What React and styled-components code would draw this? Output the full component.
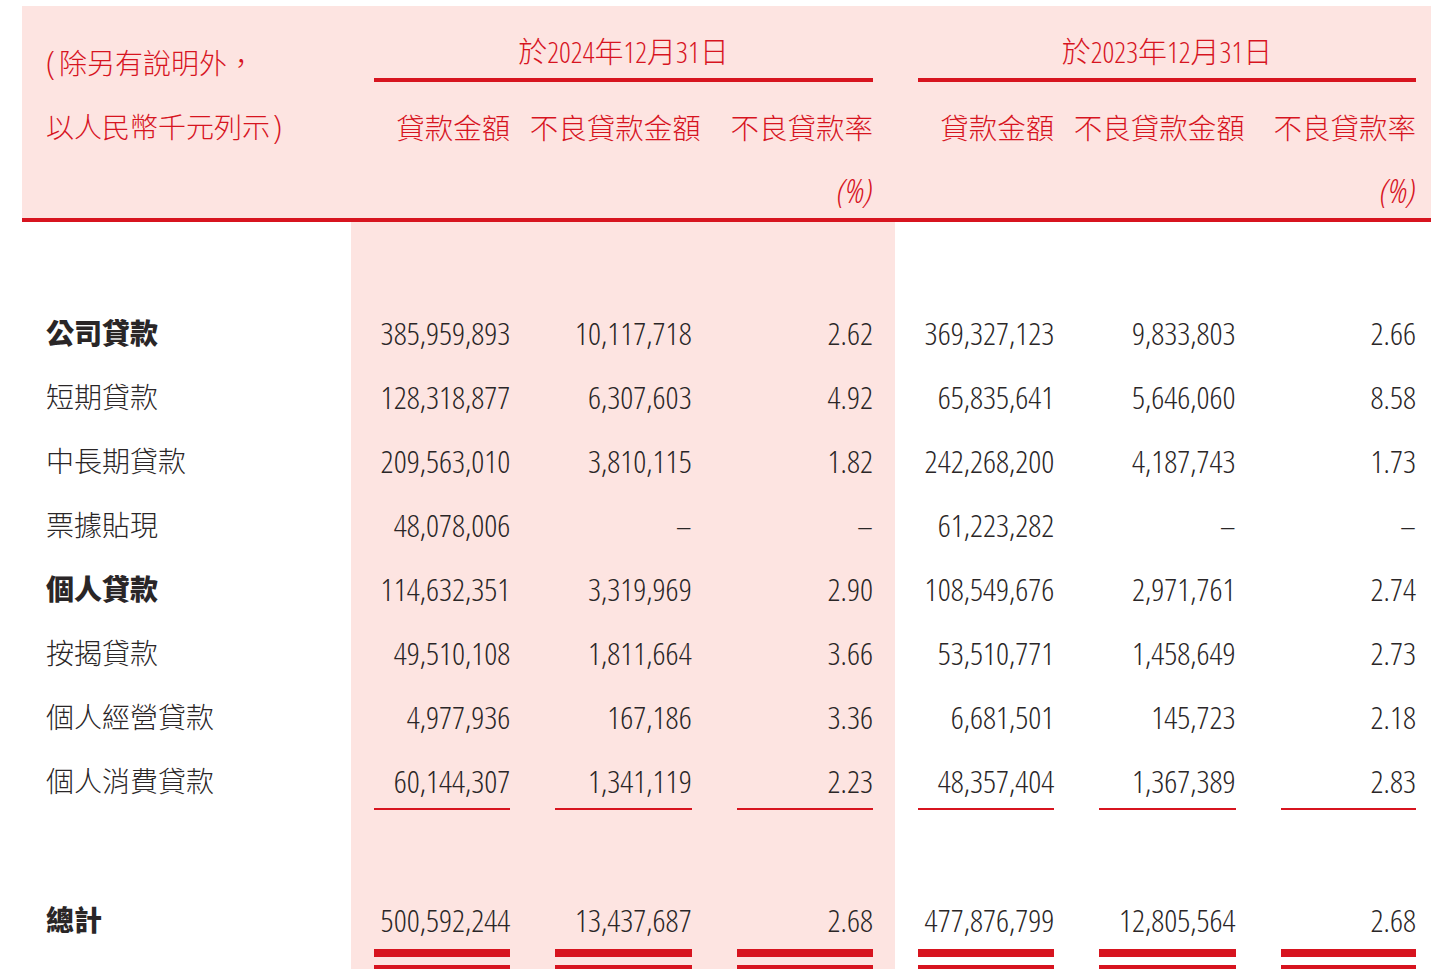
import React from "react";
import styled, { createGlobalStyle } from "styled-components";

const RED = "#d7141f";
const PINK = "#fde4e1";
const INK = "#2a2627";
const COLS = "329px repeat(5, 181.33px) 1fr";

const GlobalStyle = createGlobalStyle`
  html, body {
    margin: 0;
    padding: 0;
    background: #fff;
  }
  body {
    overflow: hidden;
  }
`;

const Page = styled.div`
  width: 1431px;
  height: 977px;
  box-sizing: border-box;
  padding: 6px 0 0 22px;
  background: #fff;
  font-family: "Open Sans", "Noto Sans CJK TC", sans-serif;
`;

const Sheet = styled.div`
  height: 963px;
  overflow: hidden;
`;

const Head = styled.header`
  display: grid;
  grid-template-columns: ${COLS};
  grid-template-rows: 76px 82px 54px;
  background: ${PINK};
  border-bottom: 4px solid ${RED};
  color: ${RED};
  font-weight: 300;
  font-stretch: 75%;
`;

const Caption = styled.div`
  grid-column: 1;
  grid-row: 1 / 4;
  padding: 25px 0 0 24px;
  font-size: 28px;
  line-height: 64px;
  white-space: nowrap;
`;

const Paren = styled.span`
  display: inline-block;
  font-size: 33px;
  font-weight: 300;
  margin: ${(p) => (p.$close ? "0 0 0 3px" : "0 4px 0 0")};
  vertical-align: top;
`;

const GroupCell = styled.div`
  grid-row: 1;
  grid-column: span 3;
  padding: 20px ${(p) => (p.$last ? 15 : 22)}px 0 23px;
`;

const GroupTitle = styled.div`
  height: 56px;
  box-sizing: border-box;
  border-bottom: 4px solid ${RED};
  text-align: center;
  font-size: 29px;
  line-height: 52px;
  white-space: nowrap;
`;

const ColHead = styled.div`
  grid-row: ${(p) => p.$row};
  display: flex;
  justify-content: flex-end;
  padding: ${(p) => (p.$row === 2 ? 28 : 8)}px ${(p) => (p.$last ? 15 : 22)}px 0 0;
  margin-right: ${(p) => (p.$shift ? -9 : 0)}px;
  font-size: ${(p) => (p.$row === 2 ? 28.5 : 34)}px;
  font-style: ${(p) => (p.$row === 3 ? "italic" : "normal")};
  line-height: 36px;
  white-space: nowrap;
`;

const Body = styled.section`
  height: 747px;
  box-sizing: border-box;
  padding-top: 79px;
  background: linear-gradient(
    to right,
    transparent 329px,
    ${PINK} 329px,
    ${PINK} 873px,
    transparent 873px
  );
`;

const Row = styled.div`
  display: grid;
  grid-template-columns: ${COLS};
  height: 64px;
`;

const Spacer = styled.div`
  height: 75px;
`;

const Label = styled.div`
  padding: 14px 0 0 24px;
  font-size: 28px;
  line-height: 36px;
  font-weight: ${(p) => (p.$bold ? 900 : 300)};
  color: ${INK};
  white-space: nowrap;
`;

const Cell = styled.div`
  padding: 14px ${(p) => (p.$last ? 15 : 22)}px 0 23px;
`;

const Value = styled.div`
  text-align: right;
  font-size: 32px;
  line-height: 36px;
  font-weight: 300;
  font-stretch: 75%;
  color: ${INK};
  white-space: nowrap;
  padding-bottom: ${(p) => (p.$rule === "double" ? 11 : p.$rule ? 9 : 0)}px;
  border-bottom: ${(p) =>
    p.$rule === "double"
      ? `24px double ${RED}`
      : p.$rule
      ? `2px solid ${RED}`
      : "none"};
`;

const rows = [
  ["公司貸款", true, ["385,959,893", "10,117,718", "2.62", "369,327,123", "9,833,803", "2.66"]],
  ["短期貸款", false, ["128,318,877", "6,307,603", "4.92", "65,835,641", "5,646,060", "8.58"]],
  ["中長期貸款", false, ["209,563,010", "3,810,115", "1.82", "242,268,200", "4,187,743", "1.73"]],
  ["票據貼現", false, ["48,078,006", "–", "–", "61,223,282", "–", "–"]],
  ["個人貸款", true, ["114,632,351", "3,319,969", "2.90", "108,549,676", "2,971,761", "2.74"]],
  ["按揭貸款", false, ["49,510,108", "1,811,664", "3.66", "53,510,771", "1,458,649", "2.73"]],
  ["個人經營貸款", false, ["4,977,936", "167,186", "3.36", "6,681,501", "145,723", "2.18"]],
  ["個人消費貸款", false, ["60,144,307", "1,341,119", "2.23", "48,357,404", "1,367,389", "2.83"]],
];

const total = ["500,592,244", "13,437,687", "2.68", "477,876,799", "12,805,564", "2.68"];

const colNames = ["貸款金額", "不良貸款金額", "不良貸款率"];

export default function App() {
  return (
    <Page>
      <GlobalStyle />
      <Sheet>
        <Head>
          <Caption>
            <Paren>(</Paren>除另有說明外，
            <br />
            以人民幣千元列示<Paren $close>)</Paren>
          </Caption>
          <GroupCell>
            <GroupTitle>於2024年12月31日</GroupTitle>
          </GroupCell>
          <GroupCell $last>
            <GroupTitle>於2023年12月31日</GroupTitle>
          </GroupCell>
          {[0, 1].map((g) =>
            colNames.map((name, i) => (
              <ColHead
                key={`${g}-${i}`}
                $row={2}
                $shift={i === 1}
                $last={g === 1 && i === 2}
              >
                {name}
              </ColHead>
            ))
          )}
          {[0, 1].map((g) =>
            [0, 1, 2].map((i) => (
              <ColHead key={`u-${g}-${i}`} $row={3} $last={g === 1 && i === 2}>
                {i === 2 ? "(%)" : ""}
              </ColHead>
            ))
          )}
        </Head>
        <Body>
          {rows.map(([label, bold, values], r) => (
            <Row key={label}>
              <Label $bold={bold}>{label}</Label>
              {values.map((v, i) => (
                <Cell key={i} $last={i === 5}>
                  <Value $rule={r === rows.length - 1 ? "single" : undefined}>{v}</Value>
                </Cell>
              ))}
            </Row>
          ))}
          <Spacer />
          <Row>
            <Label $bold>總計</Label>
            {total.map((v, i) => (
              <Cell key={i} $last={i === 5}>
                <Value $rule="double">{v}</Value>
              </Cell>
            ))}
          </Row>
        </Body>
      </Sheet>
    </Page>
  );
}
